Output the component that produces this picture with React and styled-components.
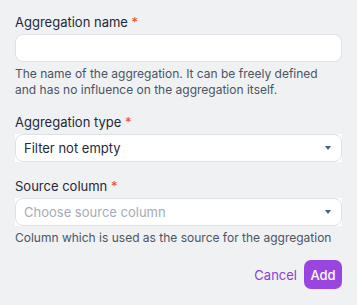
import React from "react";
import styled, { createGlobalStyle } from "styled-components";

const Global = createGlobalStyle`
  html, body { margin: 0; padding: 0; background: #f0f1f3; }
  body { font-family: Inter, "Noto Sans", sans-serif; }
  * { box-sizing: border-box; }
`;

const Form = styled.div`
  width: 357px;
  height: 305px;
  padding: 12px 15px 0 15px;
  display: flex;
  flex-direction: column;
  gap: 14px;
`;

const Field = styled.div`
  display: flex;
  flex-direction: column;
`;

const Label = styled.label`
  font-size: 13px;
  line-height: 20px;
  color: #1f2937;
  margin-bottom: 2px;
`;

const Req = styled.span`
  color: #e0521c;
`;

const TextInput = styled.div`
  height: 28px;
  background: #fff;
  border: 1px solid #dde1e6;
  border-radius: 8px;
`;

const SelectOuter = styled.div`
  background: #fff;
`;

const SelectBox = styled.div`
  height: 28px;
  border: 1px solid #dde1e6;
  border-radius: 8px;
  display: flex;
  align-items: center;
  justify-content: space-between;
  padding: 0 10px 0 8px;
  font-size: 13px;
  color: ${(p) => (p.$placeholder ? "#a4abb6" : "#1f2937")};
`;

const Caret = styled.span`
  width: 0;
  height: 0;
  border-left: 3.5px solid transparent;
  border-right: 3.5px solid transparent;
  border-top: 4px solid #4b6272;
`;

const Help = styled.div`
  font-size: 12px;
  line-height: 16px;
  color: #4a5565;
  margin-top: 4px;
`;

const Actions = styled.div`
  display: flex;
  justify-content: flex-end;
  align-items: center;
  gap: 7px;
`;

const Cancel = styled.button`
  border: none;
  background: none;
  padding: 0;
  font-family: inherit;
  font-size: 13px;
  color: #8a3fd6;
`;

const Add = styled.button`
  border: none;
  background: #9b45e0;
  color: #fff;
  font-family: inherit;
  font-size: 13px;
  font-weight: 500;
  height: 29px;
  width: 38px;
  padding: 0;
  border-radius: 7px;
`;

export default function App() {
  return (
    <>
      <Global />
      <Form>
        <Field>
          <Label>
            Aggregation name <Req>*</Req>
          </Label>
          <TextInput />
          <Help>
            The name of the aggregation. It can be freely defined and has no influence on the aggregation itself.
          </Help>
        </Field>
        <Field>
          <Label>
            Aggregation type <Req>*</Req>
          </Label>
          <SelectOuter>
            <SelectBox>
              <span>Filter not empty</span>
              <Caret />
            </SelectBox>
          </SelectOuter>
        </Field>
        <Field>
          <Label>
            Source column <Req>*</Req>
          </Label>
          <SelectOuter>
            <SelectBox $placeholder>
              <span>Choose source column</span>
              <Caret />
            </SelectBox>
          </SelectOuter>
          <Help>Column which is used as the source for the aggregation</Help>
        </Field>
        <Actions>
          <Cancel>Cancel</Cancel>
          <Add>Add</Add>
        </Actions>
      </Form>
    </>
  );
}
